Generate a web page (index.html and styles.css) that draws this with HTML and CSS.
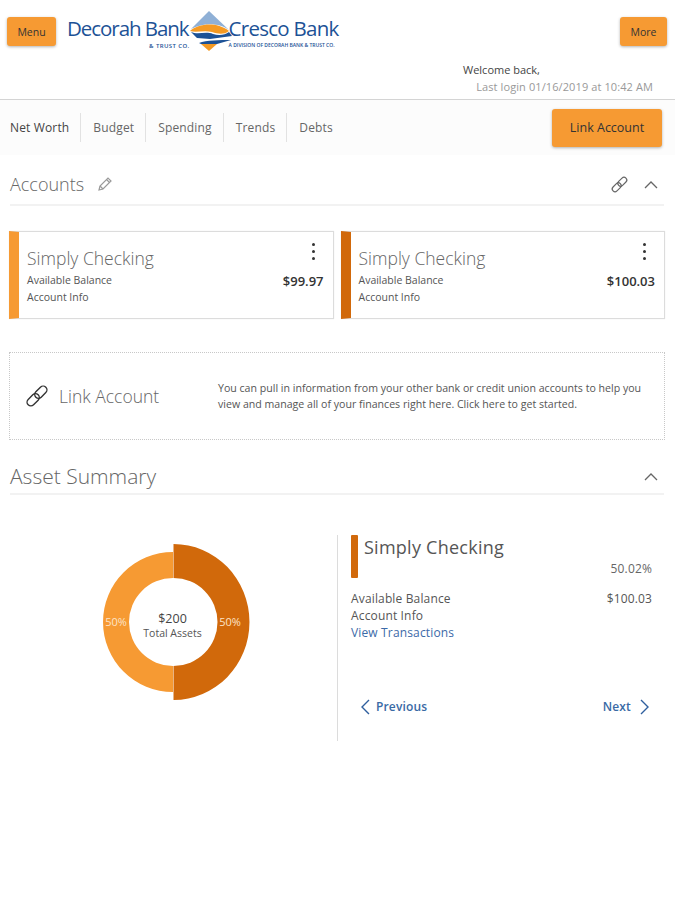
FILE: index.html
```html
<!DOCTYPE html>
<html lang="en">

<head>
    <meta charset="UTF-8">
    <meta name="viewport" content="width=device-width, initial-scale=1.0">
    <title>Accounts</title>
    <link rel="stylesheet" href="styles.css">
</head>

<body>
    <header class="top">
        <div class="top-row">
            <button class="btn btn-small">Menu</button>
            <div class="logo">
                <div class="logo-left">
                    <span class="logo-name">Decorah Bank</span>
                    <span class="logo-sub">&amp; TRUST CO.</span>
                </div>
                <svg class="logo-mark" width="46" height="42" viewBox="0 0 46 42">
                    <path d="M23 0 L43 19 C34 12 18 11 5 18 Z" fill="#8fb0d6" />
                    <path d="M4 20 C12 13 30 10 43 20 C38 24 32 23 26 21 C18 19 10 22 4 20 Z" fill="#f59a23" />
                    <path d="M5 21 C12 24 20 20 27 23 C33 25 39 24 43 21 L46 25 L24 28 L11 27 Z" fill="#1d5296" />
                    <path d="M13 32 C20 29 34 29 45 29 L31 33 L15 33 Z" fill="#1d5296" />
                    <path d="M15 33 L31 33 L23 40 Z" fill="#f59a23" />
                </svg>
                <div class="logo-right">
                    <span class="logo-name">Cresco Bank</span>
                    <span class="logo-sub">A DIVISION OF DECORAH BANK &amp; TRUST CO.</span>
                </div>
            </div>
            <button class="btn btn-small">More</button>
        </div>
        <div class="welcome">
            <div class="welcome-hi">Welcome back,</div>
            <div class="welcome-login">Last login 01/16/2019 at 10:42 AM</div>
        </div>
    </header>

    <nav class="tabs">
        <a class="tab tab-active">Net Worth</a>
        <a class="tab">Budget</a>
        <a class="tab">Spending</a>
        <a class="tab">Trends</a>
        <a class="tab">Debts</a>
        <button class="btn btn-link">Link Account</button>
    </nav>

    <section class="section-head accounts-head">
        <h2>Accounts</h2>
        <svg class="pencil" width="16" height="16" viewBox="0 0 16 16" fill="none" stroke="#9a9a9a" stroke-width="1.2">
            <path d="M2 14 L3 10 L11 2 L14 5 L6 13 Z" />
            <path d="M9.5 3.5 L12.5 6.5 M3 10 L6 13" />
        </svg>
        <svg class="chain" width="19" height="19" viewBox="0 0 24 24" fill="none" stroke="#666" stroke-width="1.5">
            <g transform="rotate(-45 12 12)">
                <rect x="0.5" y="8.5" width="13" height="7" rx="3.5" />
                <rect x="10.5" y="8.5" width="13" height="7" rx="3.5" />
            </g>
        </svg>
        <svg class="caret" width="14" height="8" viewBox="0 0 14 8" fill="none" stroke="#666" stroke-width="1.3">
            <path d="M1 7 L7 1 L13 7" />
        </svg>
    </section>

    <section class="cards">
        <div class="card card-light">
            <div class="card-main">
                <div class="card-title">Simply Checking</div>
                <div class="card-line">Available Balance</div>
                <div class="card-line">Account Info</div>
            </div>
            <div class="card-side">
                <div class="dots"><i></i><i></i><i></i></div>
                <div class="card-amount">$99.97</div>
            </div>
        </div>
        <div class="card card-dark">
            <div class="card-main">
                <div class="card-title">Simply Checking</div>
                <div class="card-line">Available Balance</div>
                <div class="card-line">Account Info</div>
            </div>
            <div class="card-side">
                <div class="dots"><i></i><i></i><i></i></div>
                <div class="card-amount">$100.03</div>
            </div>
        </div>
    </section>

    <section class="link-box">
        <svg width="26" height="26" viewBox="0 0 24 24" fill="none" stroke="#333" stroke-width="1.3">
            <g transform="rotate(-45 12 12)">
                <rect x="0.5" y="8.5" width="13" height="7" rx="3.5" />
                <rect x="10.5" y="8.5" width="13" height="7" rx="3.5" />
            </g>
        </svg>
        <div class="link-title">Link Account</div>
        <p class="link-text">You can pull in information from your other bank or credit union accounts to help you view and manage all of your finances right here. Click here to get started.</p>
    </section>

    <section class="section-head summary-head">
        <h2>Asset Summary</h2>
        <svg class="caret" width="14" height="8" viewBox="0 0 14 8" fill="none" stroke="#666" stroke-width="1.3">
            <path d="M1 7 L7 1 L13 7" />
        </svg>
    </section>

    <section class="summary">
        <div class="chart">
            <svg width="160" height="160" viewBox="0 0 160 160">
                <path d="M80 10 A70 70 0 0 0 80 150 L80 124 A44 44 0 0 1 80 36 Z" fill="#f69a33" />
                <path d="M80.5 2 A76 78 0 0 1 80.5 158 L80.5 124 A44 44 0 0 0 80.5 36 Z" fill="#d1690b" />
                <text class="pct" x="23" y="84">50%</text>
                <text class="pct" x="137" y="84">50%</text>
                <text class="chart-total" x="79.5" y="81">$200</text>
                <text class="chart-label" x="79.5" y="95">Total Assets</text>
            </svg>
        </div>
        <div class="detail">
            <div class="detail-head">
                <span class="detail-bar"></span>
                <span class="detail-title">Simply Checking</span>
            </div>
            <div class="detail-pct">50.02%</div>
            <div class="detail-row">
                <span>Available Balance</span>
                <span>$100.03</span>
            </div>
            <div class="detail-row">Account Info</div>
            <a class="detail-row detail-link">View Transactions</a>
            <div class="pager">
                <a class="pager-item">
                    <svg width="10" height="16" viewBox="0 0 10 16" fill="none" stroke="#2f5f9e" stroke-width="1.4"><path d="M9 1 L2 8 L9 15" /></svg>
                    Previous
                </a>
                <a class="pager-item pager-next">
                    Next
                    <svg width="10" height="16" viewBox="0 0 10 16" fill="none" stroke="#2f5f9e" stroke-width="1.4"><path d="M1 1 L8 8 L1 15" /></svg>
                </a>
            </div>
        </div>
    </section>
</body>

</html>
```

FILE: styles.css
```css
* {
    box-sizing: border-box;
}

body {
    margin: 0;
    background: #fff;
    color: #444;
    font-family: "Open Sans", "Liberation Sans", sans-serif;
}

.btn {
    border: 0;
    border-radius: 3px;
    background: #f69a33;
    color: #333;
    font-family: inherit;
    box-shadow: 0 1px 3px rgba(0, 0, 0, .3);
}

.btn-small {
    height: 29px;
    padding: 0;
    font-size: 10.5px;
    font-weight: 400;
}

/* header */
.top {
    height: 100px;
    padding-top: 17px;
    border-bottom: 1px solid #d4d4d4;
}

.top-row {
    display: flex;
    align-items: flex-start;
    padding: 0 8px 0 7px;
}

.top-row .btn:first-child {
    width: 49px;
}

.top-row .btn:last-child {
    width: 47px;
    margin-left: auto;
}

.logo {
    display: flex;
    margin: -3px 0 0 11px;
    color: #1d5296;
}

.logo-left,
.logo-right {
    display: flex;
    flex-direction: column;
}

.logo-left {
    align-items: flex-end;
}

.logo-name {
    font-size: 20.5px;
    line-height: 28px;
    letter-spacing: -.73px;
    white-space: nowrap;
}

.logo-left .logo-name {
    letter-spacing: -1.05px;
}

.logo-sub {
    font-size: 5px;
    line-height: 7px;
    font-weight: 600;
    white-space: nowrap;
}

.logo-left .logo-sub {
    margin-right: -1px;
    font-size: 6px;
    font-weight: 600;
    line-height: 8px;
    letter-spacing: .4px;
}

.logo-mark {
    margin: -3px -3px 0 -3px;
}

.welcome {
    width: 190px;
    margin: 9px 0 0 463px;
    font-size: 11px;
}

.welcome-hi {
    line-height: 15px;
}

.welcome-login {
    margin-top: 2px;
    color: #999;
    line-height: 15px;
    letter-spacing: .1px;
    text-align: right;
}

/* tabs */
.tabs {
    display: flex;
    align-items: center;
    height: 55px;
    padding: 0 13px 0 0;
    background: #fcfcfc;
}

.tab {
    padding: 0 11px 0 12px;
    border-right: 1px solid #e2e2e2;
    color: #666;
    font-size: 12px;
    letter-spacing: .15px;
    line-height: 29px;
}

.tab-active {
    padding-left: 10px;
    color: #444;
}

.tab:nth-child(5) {
    border-right: 0;
}

.btn-link {
    width: 110px;
    height: 38px;
    margin-left: auto;
    font-size: 12.5px;
    font-weight: 500;
}

/* section headings */
.section-head {
    display: flex;
    align-items: center;
    margin: 0 11px 0 10px;
    border-bottom: 2px solid #f2f2f2;
}

.section-head h2 {
    margin: 0;
    color: #666;
    font-size: 18px;
    font-weight: 300;
}

.accounts-head {
    height: 51px;
    margin-top: 0;
    padding-top: 9px;
}

.pencil {
    margin-left: 13px;
}

.chain {
    margin-left: auto;
}

.caret {
    margin: 2px 6px 0 15px;
}

.summary-head {
    height: 36px;
    margin-top: 19px;
    justify-content: space-between;
}

.summary-head h2 {
    font-size: 21px;
}

/* account cards */
.cards {
    display: flex;
    gap: 7px;
    margin: 25px 10px 0 9px;
}

.card {
    display: flex;
    flex: 1;
    height: 88px;
    padding: 0 9px 0 8px;
    border: 1px solid #dcdcdc;
    border-left: 10px solid #f69a33;
    box-shadow: 0 0 1px rgba(0, 0, 0, .1);
}

.card-dark {
    border-left-color: #d1690b;
}

.card-main {
    flex: 1;
    padding-top: 13px;
}

.card-title {
    margin-bottom: 1px;
    color: #666;
    font-size: 17.5px;
    font-weight: 300;
    line-height: 26px;
}

.card-line {
    color: #555;
    font-size: 10.5px;
    line-height: 17px;
}

.card-side {
    display: flex;
    flex-direction: column;
    align-items: flex-end;
}

.dots {
    display: flex;
    flex-direction: column;
    gap: 4px;
    margin: 11px 9px 0 0;
}

.dots i {
    width: 3px;
    height: 3px;
    border-radius: 50%;
    background: #333;
}

.card-amount {
    margin-top: 12px;
    color: #333;
    font-size: 13px;
    font-weight: 600;
}

/* link account box */
.link-box {
    display: flex;
    align-items: center;
    height: 88px;
    margin: 33px 10px 0 9px;
    padding: 0 12px 0 14px;
    border: 1px dotted #c8c8c8;
}

.link-title {
    flex: none;
    width: 159px;
    margin-left: 9px;
    color: #666;
    font-size: 17.5px;
    font-weight: 300;
}

.link-text {
    flex: none;
    width: 428px;
    margin: 0;
    color: #555;
    font-size: 10.6px;
    line-height: 16.5px;
}

/* summary */
.summary {
    display: flex;
    margin-top: 40px;
}

.chart {
    display: flex;
    justify-content: center;
    width: 337px;
    padding: 7px 0 0 9px;
}

.pct {
    fill: #fde4c8;
    font-size: 11px;
    text-anchor: middle;
}

.chart-total {
    fill: #444;
    font-size: 12.5px;
    text-anchor: middle;
}

.chart-label {
    fill: #555;
    font-size: 10.5px;
    text-anchor: middle;
}

.detail {
    width: 328px;
    height: 206px;
    padding-left: 13px;
    border-left: 1px solid #dcdcdc;
    font-size: 12px;
    letter-spacing: .15px;
    color: #555;
}

.detail-head {
    display: flex;
    align-items: flex-start;
}

.detail-bar {
    width: 7px;
    height: 43px;
    border-radius: 1px;
    background: #d1690b;
}

.detail-title {
    margin: 0 0 0 6px;
    color: #555;
    font-size: 18px;
    letter-spacing: .25px;
    line-height: 25px;
}

.detail-pct {
    margin-top: -18px;
    padding-right: 13px;
    color: #666;
    font-size: 12px;
    line-height: 17px;
    text-align: right;
}

.detail-row {
    display: flex;
    justify-content: space-between;
    padding-right: 13px;
    line-height: 17px;
}

.detail-pct + .detail-row {
    margin-top: 13px;
}

.detail-link {
    color: #3c6aa8;
}

.pager {
    display: flex;
    justify-content: space-between;
    margin-top: 57px;
    padding: 0 15px 0 9px;
}

.pager-item {
    display: flex;
    align-items: center;
    gap: 6px;
    color: #3a6aa5;
    font-size: 12px;
    font-weight: 600;
}

.pager-next {
    gap: 9px;
}
```
